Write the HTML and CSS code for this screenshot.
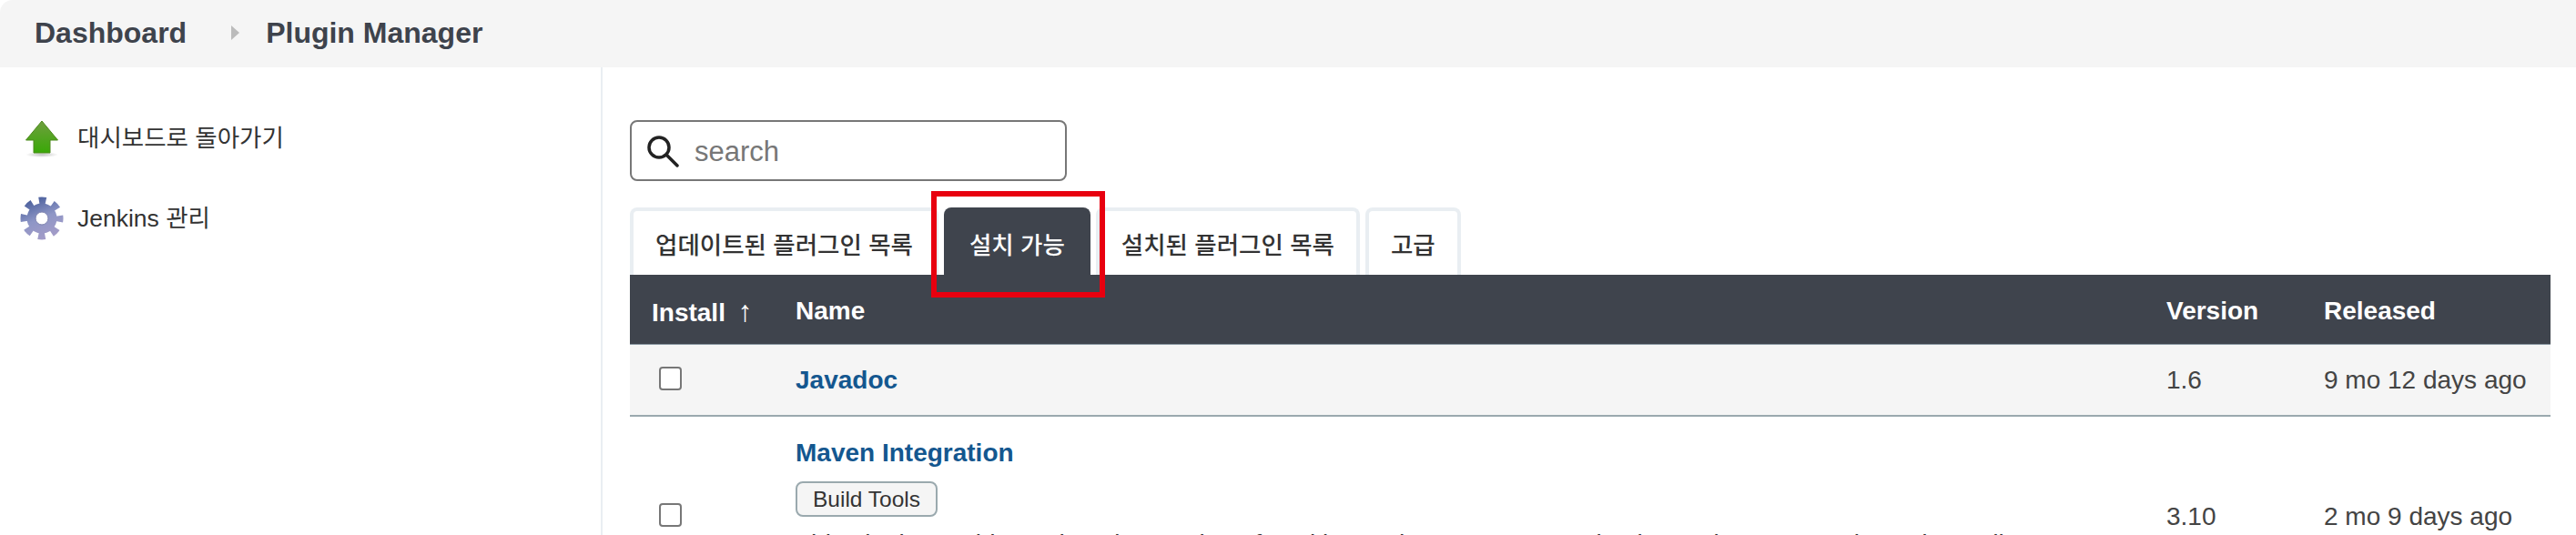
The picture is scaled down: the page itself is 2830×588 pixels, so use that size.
FILE: index.html
```html
<!DOCTYPE html>
<html lang="ko">
<head>
    <meta charset="UTF-8">
    <title>Plugin Manager</title>
    <link rel="stylesheet" href="styles.css">
</head>
<body>
<nav class="crumbs">
    <a class="crumb">Dashboard</a>
    <span class="crumb-sep"></span>
    <a class="crumb">Plugin Manager</a>
</nav>
<div class="page">
    <aside class="side">
        <a class="side-item">
            <span class="side-icon">
                <svg width="48" height="48" viewBox="0 0 48 48">
                    <defs>
                        <linearGradient id="arrowFill" x1="0" y1="0" x2="0" y2="1">
                            <stop offset="0" stop-color="#6f9f3f"/>
                            <stop offset="1" stop-color="#39a806"/>
                        </linearGradient>
                        <radialGradient id="arrowShadow">
                            <stop offset="0" stop-color="#999" stop-opacity=".6"/>
                            <stop offset="1" stop-color="#999" stop-opacity="0"/>
                        </radialGradient>
                    </defs>
                    <ellipse cx="24" cy="42" rx="18" ry="3" fill="url(#arrowShadow)"/>
                    <polygon points="24,5 41.500,26 33,26 33,40 15,40 15,26 6.500,26" fill="url(#arrowFill)" stroke="#4c8a1c" stroke-width="1"/>
                </svg>
            </span>
            <span>대시보드로 돌아가기</span>
        </a>
        <a class="side-item">
            <span class="side-icon">
                <svg width="48" height="48" viewBox="0 0 48 48">
                    <defs>
                        <linearGradient id="gearFill" gradientUnits="userSpaceOnUse" x1="14" y1="2" x2="32" y2="46">
                            <stop offset="0" stop-color="#4a5f9c"/>
                            <stop offset=".5" stop-color="#8e96c6"/>
                            <stop offset="1" stop-color="#a49cc8"/>
                        </linearGradient>
                    </defs>
                    <circle cx="24" cy="24" r="19.500" fill="none" stroke="url(#gearFill)" stroke-width="8" stroke-dasharray="7.660 7.660" stroke-dashoffset="3.830"/>
                    <circle cx="24" cy="24" r="16.500" fill="url(#gearFill)"/>
                    <circle cx="24" cy="24" r="7" fill="#fff" stroke="#7d82ae" stroke-width="1"/>
                </svg>
            </span>
            <span>Jenkins 관리</span>
        </a>
    </aside>
    <main class="main">
        <label class="search">
            <svg width="36" height="36" viewBox="0 0 36 36" fill="none" stroke="#222" stroke-width="3.500" stroke-linecap="round">
                <circle cx="14" cy="14" r="11"/>
                <path d="M22.500 22.500L34 34"/>
            </svg>
            <input class="search-input" type="text" placeholder="search">
        </label>
        <div class="tabs">
            <a class="tab">업데이트된 플러그인 목록</a>
            <a class="tab tab-active">설치 가능<span class="mark"></span></a>
            <a class="tab">설치된 플러그인 목록</a>
            <a class="tab">고급</a>
        </div>
        <table class="plugins">
            <colgroup>
                <col class="col-install">
                <col>
                <col class="col-version">
                <col class="col-released">
            </colgroup>
            <thead>
                <tr>
                    <th>Install <span class="sort">↑</span></th>
                    <th>Name</th>
                    <th>Version</th>
                    <th>Released</th>
                </tr>
            </thead>
            <tbody>
                <tr class="row-odd">
                    <td><input class="check" type="checkbox"></td>
                    <td><a class="plugin-name">Javadoc</a></td>
                    <td>1.6</td>
                    <td>9 mo 12 days ago</td>
                </tr>
                <tr>
                    <td><input class="check" type="checkbox"></td>
                    <td class="cell-name">
                        <a class="plugin-name">Maven Integration</a>
                        <div><span class="pill">Build Tools</span></div>
                        <p class="desc">This plugin provides a deep integration of Jenkins and Maven: Automatic triggers between projects depending on SNAPSHOTs, automated configuration of various Jenkins publishers.</p>
                    </td>
                    <td>3.10</td>
                    <td>2 mo 9 days ago</td>
                </tr>
            </tbody>
        </table>
    </main>
</div>
</body>
</html>
```

FILE: styles.css
```css
html,body{margin: 0;padding: 0;height: 588px;overflow: hidden;background: #fff;}
body{font-family: "Liberation Sans","Noto Sans CJK KR",sans-serif;font-size: 28px;color: #444;}
p{margin: 0;}

.crumbs{display: flex;align-items: center;height: 74px;padding: 0 0 2px 38px;background: #f5f5f5;border-top-left-radius: 14px;box-sizing: border-box;}
.crumb{font-size: 32px;font-weight: bold;color: #3e434c;}
.crumb-sep{width: 0;height: 0;margin: 0 29px 0 49px;border-left: 9px solid #bbb;border-top: 8px solid transparent;border-bottom: 8px solid transparent;}

.page{display: flex;height: 514px;}

.side{width: 660px;flex: none;padding-top: 54px;border-right: 2px solid #e9eef2;color: #333;font-size: 26.500px;}
.side-item{display: flex;align-items: center;gap: 15px;height: 48px;margin-bottom: 40px;padding-left: 22px;line-height: 44px;}
.side-item span:last-child{margin-bottom: 1px;}
.side-icon{display: block;width: 48px;height: 48px;}

.main{flex: 1;padding: 58px 28px 0 30px;min-width: 0;}

.search{display: flex;align-items: center;gap: 17px;width: 480px;height: 67px;padding-left: 16px;border: 2px solid #777;border-radius: 8px;box-sizing: border-box;}
.search-input{flex: 1;min-width: 0;border: none;outline: none;padding: 2px 0 0;background: none;font: 31px "Liberation Sans",sans-serif;}
.search-input::placeholder{color: #777;opacity: 1;}

.tabs{display: flex;gap: 6px;height: 74px;margin-top: 29px;}
.tab{display: flex;align-items: center;padding: 0 24px;border: 4px solid #e9eef2;border-bottom: none;border-radius: 8px 8px 0 0;background: #fff;color: #333;font-size: 26.500px;font-weight: 500;}
.tab-active{position: relative;background: #3f444d;border-color: #3f444d;color: #fff;}
.mark{position: absolute;top: -22px;left: -18px;right: -20px;bottom: -25px;border: 6px solid #e8000f;z-index: 2;}

.plugins{width: 100%;table-layout: fixed;border-collapse: collapse;}
.col-install{width: 158px;}
.col-version{width: 173px;}
.col-released{width: 273px;}
.plugins th{height: 76px;padding: 5px 0 0 24px;background: #3f444d;color: #fff;font-weight: bold;text-align: left;border-bottom: 1px solid #8b99a3;box-sizing: border-box;}
.plugins td{padding: 0 0 0 24px;border-bottom: 2px solid #9aa9ae;vertical-align: middle;}
.sort{margin-left: 6px;font-weight: normal;font-size: 32px;}
.row-odd td{height: 79px;padding-top: 2px;background: #f5f5f5;box-sizing: border-box;}

.check{display: block;appearance: none;width: 25px;height: 26px;margin: 0 0 4px 8px;border: 2px solid #777;border-radius: 4px;background: #fff;box-sizing: border-box;}

.plugins .cell-name{padding-top: 20px;padding-bottom: 20px;}
.plugin-name{display: block;line-height: 40px;color: #14578f;font-weight: bold;}
.pill{display: inline-block;height: 39px;margin-top: 11px;padding: 0 17px;border: 2px solid #9aa9ae;border-radius: 8px;background: #f5f5f5;color: #333;font-size: 24.500px;line-height: 35px;box-sizing: border-box;}
.desc{margin-top: 10px;line-height: 40px;color: #333;}
```
